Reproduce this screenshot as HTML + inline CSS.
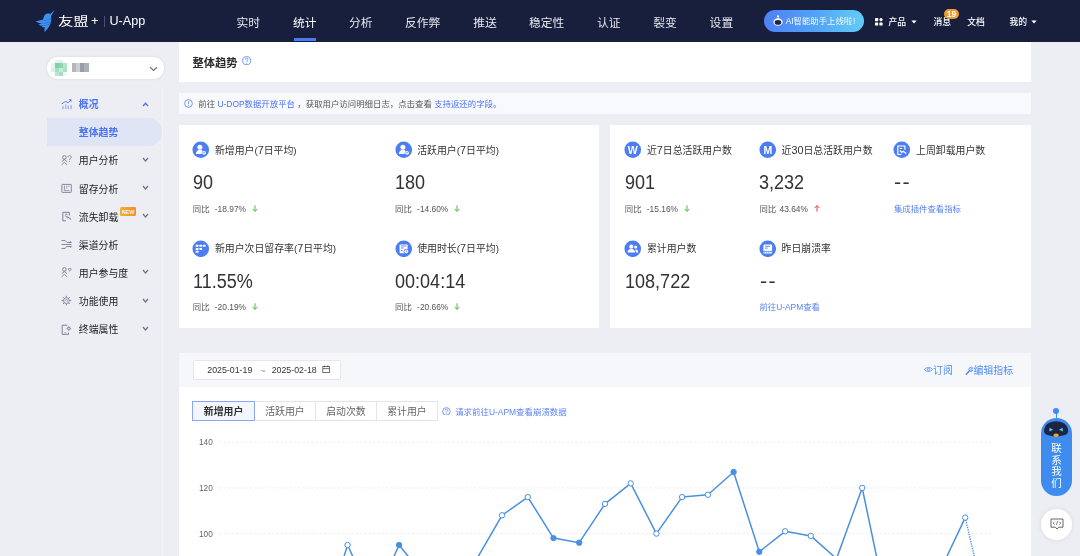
<!DOCTYPE html>
<html lang="zh-CN">
<head>
<meta charset="utf-8">
<title>友盟+ U-App 整体趋势</title>
<style>
*{box-sizing:border-box;margin:0;padding:0}
html,body{width:1080px;height:556px;overflow:hidden}
body{position:relative;background:#edeef3;font-family:"Liberation Sans","Noto Sans CJK SC",sans-serif;color:#333;font-size:10px}
.a{position:absolute;white-space:nowrap}
.hdr{left:0;top:0;width:1080px;height:42px;background:#181f3d}
.nav{top:11.3px;height:24px;line-height:24px;font-size:11.8px;color:#e4e6ee}
.nav.on{color:#fff}
.hr{top:11.8px;height:20px;line-height:20px;font-size:8.8px;color:#fff;font-weight:500}
.card{background:#fff}
.mi{left:78.8px;height:20px;line-height:20px;font-size:9.9px;color:#1c1c1c;font-weight:400}
.lbl{height:16px;line-height:16px;font-size:9.9px;color:#333}
.val{height:26px;line-height:26px;font-size:19.5px;color:#333}
.cmp{height:12px;line-height:12px;font-size:8.4px;color:#555}
.lbl b{font-weight:normal;font-size:10.8px;line-height:10px}
.lnk{color:#4a72f5}
.ic{width:16.5px;height:16.5px;border-radius:50%;background:#4a7af5}
.tab{top:401px;height:19.7px;line-height:20px;font-size:9.9px;color:#666;text-align:center;border:1px solid #e3e5ec;background:#fff}
.ax{font-size:8.25px;color:#666;height:12px;line-height:12px}
</style>
</head>
<body>
<div id="root" style="position:absolute;left:0;top:0;width:1080px;height:556px;will-change:transform;overflow:hidden">
<!-- header -->
<div class="a hdr"></div>
<svg class="a" style="left:30px;top:5px" width="32" height="32" viewBox="0 0 32 32">
  <path d="M24.6 5L20.3 9C18.500 8.100 15.800 8.500 14.600 10.200C13.800 11.400 13.600 12.800 13.200 14.400L5.400 16.400C8 17.700 10 18.300 11.800 18.300L8.500 19.700C10.400 20.700 12 20.900 13.400 20.500L11.500 21.900C12.800 22.400 13.800 22.400 14.600 22C14.300 23.800 14.300 25.300 14.700 27C17 24.800 18.800 22.400 19.900 20C21.100 17.200 21.700 14.400 21 11.200Z" fill="#3f8fee"/>
  <path d="M13.400 15.400C15.800 15.600 18.400 15 20.600 13.600M12.400 18.400C15.200 18.600 18.200 17.800 20.600 16M13.800 20.600C16 20.600 18.400 19.800 20.200 18.400" fill="none" stroke="#2b6fd0" stroke-width=".7"/>
</svg>
<div class="a" style="left:58.4px;top:11.3px;height:22px;line-height:22px;font-size:12.2px;color:#fff;font-weight:400;transform:scaleX(1.26);transform-origin:0 50%">友盟</div>
<div class="a" style="left:91px;top:10px;height:22px;line-height:22px;font-size:13px;color:#fff">+</div>
<div class="a" style="left:104px;top:16px;width:1px;height:10.5px;background:#4a5170"></div>
<div class="a" style="left:109.5px;top:10px;height:22px;line-height:22px;font-size:12.6px;color:#fff">U-App</div>

<div class="a nav" style="left:236.5px">实时</div>
<div class="a nav on" style="left:293px">统计</div>
<div class="a" style="left:293.5px;top:38.2px;width:22.5px;height:2.4px;background:#4a7af5"></div>
<div class="a nav" style="left:349px">分析</div>
<div class="a nav" style="left:405px">反作弊</div>
<div class="a nav" style="left:473.3px">推送</div>
<div class="a nav" style="left:529px">稳定性</div>
<div class="a nav" style="left:597px">认证</div>
<div class="a nav" style="left:653.3px">裂变</div>
<div class="a nav" style="left:709.6px">设置</div>

<div class="a" style="left:764.3px;top:9.7px;width:99.6px;height:22.8px;border-radius:11.25px;background:linear-gradient(90deg,#4f80f6 0%,#52a2f6 50%,#62cdf6 100%)"></div>
<svg class="a" style="left:772.5px;top:15px" width="10" height="11" viewBox="0 0 10 11">
  <circle cx="5" cy="1.3" r="1" fill="#fff"/><rect x="4.6" y="1.5" width=".8" height="2" fill="#fff"/>
  <ellipse cx="5" cy="7" rx="4.6" ry="3.8" fill="#fff"/><ellipse cx="5" cy="7.4" rx="3.3" ry="2.3" fill="#1d2544"/>
</svg>
<div class="a" style="left:785.7px;top:11.7px;height:18px;line-height:18px;font-size:8.4px;color:#f4f8ff">AI智能助手上线啦<span style="margin-left:.8px">!</span></div>

<svg class="a" style="left:875px;top:18px" width="8" height="8" viewBox="0 0 8 8"><rect x="0" y="0" width="3.2" height="3.2" rx=".6" fill="#fff"/><rect x="4.600" y=".2" width="2.800" height="2.800" rx=".5" fill="#fff" transform="rotate(45 6 1.600)"/><rect x="0" y="4.4" width="3.2" height="3.2" rx=".6" fill="#fff"/><rect x="4.4" y="4.4" width="3.2" height="3.2" rx=".6" fill="#fff"/></svg>
<div class="a hr" style="left:888.5px">产品</div>
<svg class="a" style="left:910.5px;top:20px" width="6" height="4" viewBox="0 0 6 4"><path d="M.4 .4h5.2L3 3.6z" fill="#fff"/></svg>
<div class="a hr" style="left:933.5px">消息</div>
<div class="a" style="left:943.8px;top:8.8px;width:15.2px;height:10px;border-radius:5px;background:#ee9b33;color:#fff;font-size:8.8px;letter-spacing:-.3px;line-height:10.3px;text-align:center;font-weight:bold">19</div>
<div class="a hr" style="left:967.3px">文档</div>
<div class="a hr" style="left:1009.5px">我的</div>
<svg class="a" style="left:1031px;top:20px" width="6" height="4" viewBox="0 0 6 4"><path d="M.4 .4h5.2L3 3.6z" fill="#fff"/></svg>

<!-- sidebar -->

<div class="a" style="left:46.5px;top:56.5px;width:117.5px;height:22px;border-radius:11px;background:#fff;box-shadow:0 0 3px rgba(60,70,110,.12)"></div>
<svg class="a" style="left:44px;top:52px" width="60" height="30" viewBox="44 52 60 30" shape-rendering="crispEdges"><rect x="54.9" y="60.1" width="4.1" height="3.0" fill="#e4f5ec"/><rect x="59.0" y="60.1" width="4.0" height="3.0" fill="#dff3e8"/><rect x="50.9" y="63.1" width="4.0" height="4.5" fill="#e6f6ee"/><rect x="54.9" y="63.1" width="4.1" height="4.5" fill="#7fd1a6"/><rect x="59.0" y="63.1" width="4.0" height="4.5" fill="#8ed6b0"/><rect x="63.0" y="63.1" width="4.1" height="4.5" fill="#b5e4cb"/><rect x="50.9" y="67.6" width="4.0" height="4.1" fill="#dcf2e6"/><rect x="54.9" y="67.6" width="4.1" height="4.1" fill="#a3dec0"/><rect x="59.0" y="67.6" width="4.0" height="4.1" fill="#c5ead7"/><rect x="63.0" y="67.6" width="4.1" height="4.1" fill="#ade1c6"/><rect x="54.9" y="71.7" width="4.1" height="4.2" fill="#b9e6cf"/><rect x="59.0" y="71.7" width="4.0" height="4.2" fill="#a5dfc1"/><rect x="63.0" y="71.7" width="4.1" height="4.2" fill="#f0faf5"/><rect x="71.8" y="63.1" width="4.2" height="8.6" fill="#b5b5bb"/><rect x="76.0" y="63.1" width="4.0" height="8.6" fill="#cfcfd2"/><rect x="80.0" y="63.1" width="4.1" height="8.6" fill="#9a9da6"/><rect x="84.1" y="63.1" width="4.8" height="8.6" fill="#adb0b9"/></svg>
<svg class="a" style="left:148.5px;top:65.6px" width="9" height="6" viewBox="0 0 9 6"><path d="M1.100 1.300l3.400 3.200L7.900 1.300" fill="none" stroke="#6c7185" stroke-width="1.200"/></svg>
<div class="a" style="left:162px;top:88px;width:1px;height:470px;background:#f1f2f6"></div>

<div class="a" style="left:46.5px;top:118.2px;width:115.5px;height:28px;border-radius:0 14px 14px 0;background:#dfe5f5"></div>
<div class="a mi" style="top:95.2px;color:#4a72f5;font-weight:bold">概况</div>
<div class="a mi" style="top:123.3px;color:#4a72f5;font-weight:bold">整体趋势</div>
<div class="a mi" style="top:151.4px">用户分析</div>
<div class="a mi" style="top:179.5px">留存分析</div>
<div class="a mi" style="top:207.6px">流失卸载</div>
<div class="a mi" style="top:235.7px">渠道分析</div>
<div class="a mi" style="top:263.8px">用户参与度</div>
<div class="a mi" style="top:291.9px">功能使用</div>
<div class="a mi" style="top:320.0px">终端属性</div>
<div class="a" style="left:120px;top:206.9px;width:16px;height:8.8px;border-radius:1.5px 1px 1.5px 1px;background:linear-gradient(90deg,#f1ac3b,#ee9131);color:#fff6e6;font-size:5.4px;font-weight:bold;line-height:11.2px;overflow:hidden;text-align:center">NEW</div>
<svg class="a" style="left:142px;top:101.5px" width="7" height="5" viewBox="0 0 7 5"><path d="M1 4l2.5-2.700L6 4" fill="none" stroke="#4a72f5" stroke-width="1.300"/></svg>
<svg class="a" style="left:142px;top:157.0px" width="7" height="5.500" viewBox="0 0 7 5.500"><path d="M1 1l2.500 3L6 1" fill="none" stroke="#6b7186" stroke-width="1.200"/></svg>
<svg class="a" style="left:142px;top:185.1px" width="7" height="5.500" viewBox="0 0 7 5.500"><path d="M1 1l2.500 3L6 1" fill="none" stroke="#6b7186" stroke-width="1.200"/></svg>
<svg class="a" style="left:142px;top:213.2px" width="7" height="5.500" viewBox="0 0 7 5.500"><path d="M1 1l2.500 3L6 1" fill="none" stroke="#6b7186" stroke-width="1.200"/></svg>
<svg class="a" style="left:142px;top:269.4px" width="7" height="5.500" viewBox="0 0 7 5.500"><path d="M1 1l2.500 3L6 1" fill="none" stroke="#6b7186" stroke-width="1.200"/></svg>
<svg class="a" style="left:142px;top:297.5px" width="7" height="5.500" viewBox="0 0 7 5.500"><path d="M1 1l2.500 3L6 1" fill="none" stroke="#6b7186" stroke-width="1.200"/></svg>
<svg class="a" style="left:142px;top:325.6px" width="7" height="5.500" viewBox="0 0 7 5.500"><path d="M1 1l2.500 3L6 1" fill="none" stroke="#6b7186" stroke-width="1.200"/></svg>
<svg class="a" style="left:60.5px;top:98.6px" width="11" height="11" viewBox="0 0 11 11"><path d="M2 10.200V7.200M7.200 10.200V6.600M10.100 10.200V6.200" stroke="#7d9af7" stroke-width="1" fill="none"/><path d="M4.700 10.200V5.400" stroke="#9db3f9" stroke-width="1.400" fill="none"/><path d="M.7 5L4.700 2.300L7 3.900L9.600 1.300" stroke="#4a72f5" stroke-width=".9" fill="none"/><path d="M7.600 .3H10.400V3.200z" fill="#4a72f5"/></svg>
<svg class="a" style="left:60.5px;top:154.9px" width="11" height="11" viewBox="0 0 11 11"><circle cx="3.4" cy="2.4" r="1.800" stroke="#6f778c" fill="none" stroke-width=".85"/><path d="M.7 6.700L3.400 4.500L6.100 6.700M.7 9.800L3.400 7.300L6.100 9.800" stroke="#6f778c" fill="none" stroke-width=".85"/><path d="M7 2.100c0-2 3.200-2 3.200 0c0 1.300-1.600 1.300-1.600 2.900M8.600 6.100v.9" stroke="#6f778c" fill="none" stroke-width=".85"/></svg>
<svg class="a" style="left:60.5px;top:183.0px" width="11" height="11" viewBox="0 0 11 11"><rect x=".9" y="1.400" width="9.400" height="8" rx=".5" stroke="#6f778c" fill="none" stroke-width=".85"/><path d="M3.400 2.600v5h5.200M5.800 2.600v3M8 2.600v1.400" stroke="#8a91a4" stroke-width=".9" fill="none"/></svg>
<svg class="a" style="left:60.5px;top:211.1px" width="11" height="11" viewBox="0 0 11 11"><path d="M8.300 4.600V1.300H1.800v8.500h3.300" stroke="#6f778c" fill="none" stroke-width=".9"/><path d="M4 3.200h2.600" stroke="#6f778c" fill="none" stroke-width=".8"/><path d="M4.200 4.600L6.800 7M6.600 5.600L10.200 8.600" stroke="#6f778c" fill="none" stroke-width="1"/></svg>
<svg class="a" style="left:60.5px;top:239.1px" width="11" height="11" viewBox="0 0 11 11"><path d="M.5 1.500h3.600l1.900 2h4.400M8.900 2.100l1.500 1.400M.5 5.500h9.900M.5 9.500h3.600l1.400-2h4.900M10.400 7.500L9 8.700" stroke="#6f778c" fill="none" stroke-width=".85"/></svg>
<svg class="a" style="left:60.5px;top:267.3px" width="11" height="11" viewBox="0 0 11 11"><circle cx="3.4" cy="2.4" r="1.800" stroke="#6f778c" fill="none" stroke-width=".85"/><path d="M.7 6.700L3.400 4.500L6.100 6.700M.7 9.800L3.400 7.300L6.100 9.800" stroke="#6f778c" fill="none" stroke-width=".85"/><path d="M8.700 4.100C6.400 2.400 7.500 .6 8.700 1.700C9.900 .6 11 2.400 8.700 4.100z" stroke="#6f778c" fill="none" stroke-width=".8"/></svg>
<svg class="a" style="left:60.5px;top:295.4px" width="11" height="11" viewBox="0 0 11 11"><circle cx="5.400" cy="5.600" r="2.900" stroke="#6f778c" fill="none" stroke-width=".85"/><path d="M4.600 6.200a1.100 1.100 0 1 1 1.600 .3" stroke="#6f778c" fill="none" stroke-width=".7"/><path d="M5.400 .8v1.500M5.400 8.900v1.500M.6 5.600h1.500M8.700 5.600h1.500M2 2.200l1.100 1.100M7.700 7.900l1.100 1.100M8.800 2.200L7.700 3.300M3.100 7.900L2 9" stroke="#6f778c" fill="none" stroke-width=".9"/></svg>
<svg class="a" style="left:60.5px;top:323.5px" width="11" height="11" viewBox="0 0 11 11"><path d="M6.300 1.200H1.200v9.200h6.300V8.600" stroke="#6f778c" fill="none" stroke-width=".9"/><path d="M3.400 8.600h1.800" stroke="#6f778c" fill="none" stroke-width=".7"/><circle cx="7.800" cy="4.500" r="1.300" stroke="#6f778c" fill="none" stroke-width=".8"/><path d="M7.800 2.300v.9M7.800 5.800v.9M5.600 4.500h.9M9.100 4.500h.9M6.300 3l.6.600M8.700 5.400l.6.600M9.300 3l-.6.600M6.900 5.400l-.6.600" stroke="#6f778c" fill="none" stroke-width=".7"/></svg>
<!-- main -->

<div class="a card" style="left:178.5px;top:42px;width:852.5px;height:39.5px"></div>
<div class="a" style="left:192.5px;top:52.7px;height:20px;line-height:20px;font-size:11.25px;font-weight:bold;color:#2a2a2a">整体趋势</div>
<svg class="a" style="left:242px;top:55.7px" width="9.400" height="9.400" viewBox="0 0 10 10"><circle cx="5" cy="5" r="4.3" fill="none" stroke="#5b83f5" stroke-width=".9"/><path d="M3.5 4c0-2 3-2 3 0c0 1.1-1.5 1.1-1.5 2.2M5 7.2v.9" stroke="#5b83f5" stroke-width=".9" fill="none"/></svg>

<div class="a" style="left:178.5px;top:92.7px;width:852.5px;height:21.2px;background:#f8f9fd"></div>
<svg class="a" style="left:183.8px;top:99.3px" width="9" height="9" viewBox="0 0 10 10"><circle cx="5" cy="5" r="4.3" fill="none" stroke="#5b83f5" stroke-width=".9"/><path d="M5 2.6v3.2M5 6.8v.9" stroke="#5b83f5" stroke-width=".9"/></svg>
<div class="a" style="left:198.3px;top:95.8px;height:16px;line-height:16px;font-size:8.42px;color:#555">前往 <span class="lnk">U-DOP数据开放平台</span> ，获取用户访问明细日志，点击查看 <span class="lnk">支持返还的字段。</span></div>

<div class="a card" style="left:178.5px;top:125px;width:420.5px;height:203px"></div>
<div class="a card" style="left:610.2px;top:125px;width:420.8px;height:203px"></div>
<svg class="a" style="left:192.20px;top:141.10px" width="17.5" height="17.5" viewBox="-.5 -.5 17.5 17.5"><circle cx="8.25" cy="8.25" r="8.3" fill="#4c7df3"/><circle cx="7.4" cy="5.7" r="2.5" fill="#fff"/><path d="M3.4 12.6c0-2.8 1.8-4.4 4-4.4 1.2 0 2.2.5 2.9 1.3a2.6 2.6 0 0 0-1 3.1z" fill="#fff"/><circle cx="11.6" cy="11.3" r="1.9" fill="#fff"/><path d="M10.6 11.3h2" stroke="#4a7af5" stroke-width=".8"/></svg>
<div class="a lbl" style="left:214.9px;top:142.8px">新增用户(<b>7</b>日平均)</div>
<div class="a val" style="left:192.6px;top:169.2px;transform:scaleX(0.925);transform-origin:0 0">90</div>
<div class="a cmp" style="left:192.8px;top:202.8px">同比</div>
<div class="a cmp" style="left:214.8px;top:202.8px">-18.97%</div>
<svg class="a" style="left:251.7px;top:204.7px" width="6" height="7" viewBox="0 0 6 7"><path d="M3 .300V6.300M.500 3.800L3 6.400l2.500-2.600" fill="none" stroke="#4fbe3f" stroke-width="1"/></svg>
<svg class="a" style="left:394.50px;top:141.10px" width="17.5" height="17.5" viewBox="-.5 -.5 17.5 17.5"><circle cx="8.25" cy="8.25" r="8.3" fill="#4c7df3"/><circle cx="7.4" cy="5.7" r="2.5" fill="#fff"/><path d="M3.4 12.6c0-2.8 1.8-4.4 4-4.4 1.2 0 2.2.5 2.9 1.3a2.6 2.6 0 0 0-1 3.1z" fill="#fff"/><circle cx="11.6" cy="11.3" r="1.9" fill="#fff"/><path d="M10.6 11.3h2" stroke="#4a7af5" stroke-width=".8"/></svg>
<div class="a lbl" style="left:417.2px;top:142.8px">活跃用户(<b>7</b>日平均)</div>
<div class="a val" style="left:394.9px;top:169.2px;transform:scaleX(0.925);transform-origin:0 0">180</div>
<div class="a cmp" style="left:395.1px;top:202.8px">同比</div>
<div class="a cmp" style="left:417.1px;top:202.8px">-14.60%</div>
<svg class="a" style="left:454.0px;top:204.7px" width="6" height="7" viewBox="0 0 6 7"><path d="M3 .300V6.300M.500 3.800L3 6.400l2.500-2.600" fill="none" stroke="#4fbe3f" stroke-width="1"/></svg>
<svg class="a" style="left:192.20px;top:239.60px" width="17.5" height="17.5" viewBox="-.5 -.5 17.5 17.5"><circle cx="8.25" cy="8.25" r="8.3" fill="#4c7df3"/><rect x="3.25" y="4.30" width="2.700" height="1.900" rx=".5" fill="#fff"/><rect x="6.90" y="4.30" width="2.700" height="1.900" rx=".5" fill="#fff"/><rect x="10.35" y="4.30" width="2.700" height="1.900" rx=".5" fill="#fff"/><rect x="3.25" y="7.50" width="2.700" height="1.900" rx=".5" fill="#fff"/><rect x="6.90" y="7.50" width="2.700" height="1.900" rx=".5" fill="#fff"/><rect x="3.25" y="10.35" width="2.700" height="1.900" rx=".5" fill="#fff"/></svg>
<div class="a lbl" style="left:214.9px;top:241.3px">新用户次日留存率(<b>7</b>日平均)</div>
<div class="a val" style="left:192.6px;top:267.7px;transform:scaleX(0.925);transform-origin:0 0">11.55%</div>
<div class="a cmp" style="left:192.8px;top:301.3px">同比</div>
<div class="a cmp" style="left:214.8px;top:301.3px">-20.19%</div>
<svg class="a" style="left:251.7px;top:303.2px" width="6" height="7" viewBox="0 0 6 7"><path d="M3 .300V6.300M.500 3.800L3 6.400l2.500-2.600" fill="none" stroke="#4fbe3f" stroke-width="1"/></svg>
<svg class="a" style="left:394.50px;top:239.60px" width="17.5" height="17.5" viewBox="-.5 -.5 17.5 17.5"><circle cx="8.25" cy="8.25" r="8.3" fill="#4c7df3"/><rect x="4.1" y="4.05" width="8" height="8.8" rx=".8" fill="#fff"/><path d="M5.400 5.500h5.400M5.400 7.500h2.800M5.400 10h1.600" stroke="#4c7df3" stroke-width=".9"/><circle cx="10.800" cy="10.900" r="2.600" fill="#4c7df3"/><circle cx="10.800" cy="10.900" r="1.900" fill="#fff"/><path d="M10.700 9.800v1.200l1 .7" stroke="#4c7df3" stroke-width=".7" fill="none"/></svg>
<div class="a lbl" style="left:417.2px;top:241.3px">使用时长(<b>7</b>日平均)</div>
<div class="a val" style="left:394.9px;top:267.7px;transform:scaleX(0.925);transform-origin:0 0">00:04:14</div>
<div class="a cmp" style="left:395.1px;top:301.3px">同比</div>
<div class="a cmp" style="left:417.1px;top:301.3px">-20.66%</div>
<svg class="a" style="left:454.0px;top:303.2px" width="6" height="7" viewBox="0 0 6 7"><path d="M3 .300V6.300M.500 3.800L3 6.400l2.500-2.600" fill="none" stroke="#4fbe3f" stroke-width="1"/></svg>
<svg class="a" style="left:624.20px;top:141.10px" width="17.5" height="17.5" viewBox="-.5 -.5 17.5 17.5"><circle cx="8.25" cy="8.25" r="8.3" fill="#4c7df3"/><text x="8.25" y="12" text-anchor="middle" font-family="Liberation Sans, sans-serif" font-weight="bold" font-size="10.5" fill="#fff">W</text></svg>
<div class="a lbl" style="left:646.9px;top:142.8px">近<b>7</b>日总活跃用户数</div>
<div class="a val" style="left:624.6px;top:169.2px;transform:scaleX(0.925);transform-origin:0 0">901</div>
<div class="a cmp" style="left:624.8px;top:202.8px">同比</div>
<div class="a cmp" style="left:646.8px;top:202.8px">-15.16%</div>
<svg class="a" style="left:683.5px;top:204.7px" width="6" height="7" viewBox="0 0 6 7"><path d="M3 .300V6.300M.500 3.800L3 6.400l2.500-2.600" fill="none" stroke="#4fbe3f" stroke-width="1"/></svg>
<svg class="a" style="left:758.80px;top:141.10px" width="17.5" height="17.5" viewBox="-.5 -.5 17.5 17.5"><circle cx="8.25" cy="8.25" r="8.3" fill="#4c7df3"/><text x="8.25" y="12" text-anchor="middle" font-family="Liberation Sans, sans-serif" font-weight="bold" font-size="10.5" fill="#fff">M</text></svg>
<div class="a lbl" style="left:781.5px;top:142.8px">近<b>30</b>日总活跃用户数</div>
<div class="a val" style="left:759.2px;top:169.2px;transform:scaleX(0.925);transform-origin:0 0">3,232</div>
<div class="a cmp" style="left:759.4px;top:202.8px">同比</div>
<div class="a cmp" style="left:779.5px;top:202.8px">43.64%</div>
<svg class="a" style="left:813.8px;top:204.7px" width="6" height="7" viewBox="0 0 6 7"><path d="M3 6.700V.700M.500 3.200L3 .600l2.500 2.600" fill="none" stroke="#e8413a" stroke-width="1"/></svg>
<svg class="a" style="left:893.30px;top:141.10px" width="17.5" height="17.5" viewBox="-.5 -.5 17.5 17.5"><circle cx="8.25" cy="8.25" r="8.3" fill="#4c7df3"/><path d="M11.400 8.200V4.500H4.300v8.500h3.600" fill="none" stroke="#fff" stroke-width="1.200"/><path d="M6.300 6.900h2.400" stroke="#fff" stroke-width="1"/><path d="M6.300 9l2 2 1.500-1.300 3 2.200" fill="none" stroke="#fff" stroke-width="1.200"/></svg>
<div class="a lbl" style="left:916.0px;top:142.8px">上周卸载用户数</div>
<div class="a val" style="left:894.2px;top:169.0px;letter-spacing:1.3px;transform:scaleX(1.1);transform-origin:0 0">--</div>
<div class="a cmp" style="left:893.9px;top:202.8px;color:#5b83f5">集成插件查看指标</div>
<svg class="a" style="left:624.20px;top:239.60px" width="17.5" height="17.5" viewBox="-.5 -.5 17.5 17.5"><circle cx="8.25" cy="8.25" r="8.3" fill="#4c7df3"/><circle cx="6.8" cy="6.2" r="2.1" fill="#fff"/><path d="M3 12c0-2.4 1.6-3.6 3.8-3.6s3.8 1.2 3.8 3.6z" fill="#fff"/><circle cx="11.2" cy="6.6" r="1.5" fill="#fff"/><path d="M11.4 12c0-1.2-.3-2.2-.9-3 .2-.1.5-.1.8-.1 1.500 0 2.400 1 2.400 3.100z" fill="#fff"/></svg>
<div class="a lbl" style="left:646.9px;top:241.3px">累计用户数</div>
<div class="a val" style="left:624.6px;top:267.7px;transform:scaleX(0.925);transform-origin:0 0">108,722</div>
<svg class="a" style="left:758.80px;top:239.60px" width="17.5" height="17.5" viewBox="-.5 -.5 17.5 17.5"><circle cx="8.25" cy="8.25" r="8.3" fill="#4c7df3"/><path d="M3.900 11V5a.9 .9 0 0 1 .9-.9h6.900a.9 .9 0 0 1 .9 .9V11z" fill="#fff"/><path d="M5.500 5.700h5.200M5.500 7.600h2.800" stroke="#4c7df3" stroke-width=".9"/><path d="M3.900 11.300l1.100 .9 1.100-.9 1.100 .9 1.100-.9 1.100 .9 1.100-.9 1.100 .9 1.050-.9v1.600H3.900z" fill="#fff"/><path d="M3.900 11l1.100-.9 1.100 .9 1.100-.9 1.100 .9 1.100-.9 1.100 .9 1.100-.9 1.050 .9z" fill="#4c7df3"/></svg>
<div class="a lbl" style="left:781.5px;top:241.3px">昨日崩溃率</div>
<div class="a val" style="left:759.7px;top:267.5px;letter-spacing:1.3px;transform:scaleX(1.1);transform-origin:0 0">--</div>
<div class="a cmp" style="left:759.4px;top:301.3px;color:#5b83f5">前往U-APM查看</div>

<div class="a" style="left:178.5px;top:353px;width:852.5px;height:34px;background:#f6f7fa"></div>
<div class="a card" style="left:178.5px;top:387px;width:852.5px;height:169px"></div>
<div class="a" style="left:193px;top:360.4px;width:147.5px;height:19.2px;background:#fff;border:1px solid #e4e6eb;border-radius:1.5px"></div>
<div class="a" style="left:207.3px;top:364px;height:12px;line-height:12px;font-size:8.8px;color:#333">2025-01-19</div>
<div class="a" style="left:260px;top:365.2px;height:12px;line-height:12px;font-size:9.5px;color:#999">~</div>
<div class="a" style="left:271.7px;top:364px;height:12px;line-height:12px;font-size:8.8px;color:#333">2025-02-18</div>
<svg class="a" style="left:321.7px;top:365.3px" width="8.4" height="8.4" viewBox="0 0 9 9"><rect x=".9" y="1.600" width="7.200" height="6.600" fill="none" stroke="#444" stroke-width=".8"/><path d="M.9 3.900h7.200M2.800 .500v1.800M6.200 .500v1.800" stroke="#444" stroke-width=".8"/></svg>

<svg class="a" style="left:924px;top:366.300px" width="9" height="7" viewBox="0 0 9 7"><path d="M.500 3.500C2 .800 7 .800 8.500 3.500C7 6.200 2 6.200 .500 3.500z" fill="none" stroke="#4c8bf5" stroke-width=".8"/><circle cx="4.500" cy="3.500" r="1.200" fill="none" stroke="#4c8bf5" stroke-width=".8"/></svg>
<div class="a" style="left:933px;top:362.9px;height:16px;line-height:16px;font-size:9.9px;color:#4c8bf5">订阅</div>
<svg class="a" style="left:964.500px;top:365.500px" width="9" height="9" viewBox="0 0 9 9"><path d="M1.200 8.200L4.600 4.800" stroke="#4c8bf5" stroke-width="1.500" stroke-linecap="round" fill="none"/><path d="M7.700 2.100A2.100 2.100 0 1 0 7.900 4.200L6.400 4.300L5.700 3.200Z" fill="none" stroke="#4c8bf5" stroke-width=".9"/></svg>
<div class="a" style="left:973.5px;top:362.9px;height:16px;line-height:16px;font-size:9.9px;color:#4c8bf5">编辑指标</div>

<div class="a tab" style="left:254px;width:61.800px">活跃用户</div>
<div class="a tab" style="left:315px;width:61.800px">启动次数</div>
<div class="a tab" style="left:376px;width:61.800px">累计用户</div>
<div class="a tab" style="left:192.400px;width:62.400px;border-color:#8aa6f7;background:#f4f6fe;color:#2f2f2f;font-weight:bold">新增用户</div>
<svg class="a" style="left:442.300px;top:406.500px" width="8.800" height="8.800" viewBox="0 0 10 10"><circle cx="5" cy="5" r="4.300" fill="none" stroke="#5b83f5" stroke-width=".9"/><path d="M3.500 4c0-2 3-2 3 0c0 1.100-1.500 1.100-1.500 2.200M5 7.200v.9" stroke="#5b83f5" stroke-width=".9" fill="none"/></svg>
<div class="a" style="left:455.2px;top:406.4px;height:12px;line-height:12px;font-size:8.45px;color:#5b83f5">请求前往U-APM查看崩溃数据</div>
<svg class="a" style="left:0;top:387px" width="1080" height="169" viewBox="0 387 1080 169">
<path d="M219 442.3H991" stroke="#e6e8ee" stroke-width=".8" stroke-dasharray="2.2 2.2"/>
<path d="M219 487.9H991" stroke="#e6e8ee" stroke-width=".8" stroke-dasharray="2.2 2.2"/>
<path d="M219 533.6H991" stroke="#e6e8ee" stroke-width=".8" stroke-dasharray="2.2 2.2"/>
<polyline fill="none" stroke="#4a90e2" stroke-width="1.500" stroke-linejoin="round" points="219.0,624.9 244.7,620.3 270.5,629.4 296.2,636.3 321.9,627.1 347.6,545.0 373.4,602.0 399.1,545.0 424.8,576.9 450.6,590.6 476.3,559.8 502.0,515.3 527.8,497.1 553.5,538.1 579.2,542.7 605.0,503.9 630.7,483.4 656.4,533.6 682.1,497.1 707.9,494.8 733.6,472.0 759.3,551.8 785.1,531.3 810.8,535.9 836.5,558.7 862.2,487.9 888.0,611.2 913.7,624.9 939.4,572.4 965.2,517.6"/>
<path d="M965.2 517.6L990.9 627.1" stroke="#4a90e2" stroke-width="1.500" stroke-dasharray="1.200 1.200" fill="none"/>
<circle cx="347.6" cy="545.0" r="2.700" fill="#fff" stroke="#4a90e2" stroke-width="1"/>
<circle cx="399.1" cy="545.0" r="2.700" fill="#4a90e2" stroke="#4a90e2" stroke-width="1"/>
<circle cx="502.0" cy="515.3" r="2.700" fill="#fff" stroke="#4a90e2" stroke-width="1"/>
<circle cx="527.8" cy="497.1" r="2.700" fill="#fff" stroke="#4a90e2" stroke-width="1"/>
<circle cx="553.5" cy="538.1" r="2.700" fill="#4a90e2" stroke="#4a90e2" stroke-width="1"/>
<circle cx="579.2" cy="542.7" r="2.700" fill="#4a90e2" stroke="#4a90e2" stroke-width="1"/>
<circle cx="605.0" cy="503.9" r="2.700" fill="#fff" stroke="#4a90e2" stroke-width="1"/>
<circle cx="630.7" cy="483.4" r="2.700" fill="#fff" stroke="#4a90e2" stroke-width="1"/>
<circle cx="656.4" cy="533.6" r="2.700" fill="#fff" stroke="#4a90e2" stroke-width="1"/>
<circle cx="682.1" cy="497.1" r="2.700" fill="#fff" stroke="#4a90e2" stroke-width="1"/>
<circle cx="707.9" cy="494.8" r="2.700" fill="#fff" stroke="#4a90e2" stroke-width="1"/>
<circle cx="733.6" cy="472.0" r="2.700" fill="#4a90e2" stroke="#4a90e2" stroke-width="1"/>
<circle cx="759.3" cy="551.8" r="2.700" fill="#4a90e2" stroke="#4a90e2" stroke-width="1"/>
<circle cx="785.1" cy="531.3" r="2.700" fill="#fff" stroke="#4a90e2" stroke-width="1"/>
<circle cx="810.8" cy="535.9" r="2.700" fill="#fff" stroke="#4a90e2" stroke-width="1"/>
<circle cx="862.2" cy="487.9" r="2.700" fill="#fff" stroke="#4a90e2" stroke-width="1"/>
<circle cx="965.2" cy="517.6" r="2.700" fill="#fff" stroke="#4a90e2" stroke-width="1"/>
</svg>
<div class="a ax" style="left:199px;top:437.4px">140</div>
<div class="a ax" style="left:199px;top:483.0px">120</div>
<div class="a ax" style="left:199px;top:528.7px">100</div>

<div class="a" style="left:1055.600px;top:412px;width:1.600px;height:8px;background:#3f8cf0"></div>
<div class="a" style="left:1053.4px;top:408.3px;width:6px;height:6px;border-radius:50%;background:#3f8cf0"></div>
<div class="a" style="left:1041px;top:417.500px;width:31px;height:78px;border-radius:15.500px;background:#3f8cf0"></div>
<svg class="a" style="left:1043.4px;top:419.8px" width="26.2" height="18.9" viewBox="0 0 25 18"><path d="M1 11C1 4.500 6 1.200 12.500 1.200S24 4.500 24 11c0 3-5 4.600-11.500 4.600S1 14 1 11z" fill="#1d2544"/><path d="M6.200 7.400l3.400 1.800-3.400 1.800z" fill="#5ad2f5"/><path d="M18.800 7.400l-3.400 1.800 3.400 1.800z" fill="#5ad2f5"/><ellipse cx="12.500" cy="14.600" rx="2.600" ry="1.700" fill="#f5a623"/></svg>
<div class="a" style="left:1041px;top:443.2px;width:31px;font-size:10.5px;line-height:11.5px;color:#fff;text-align:center;white-space:normal">联<br>系<br>我<br>们</div>
<div class="a" style="left:1041px;top:508.500px;width:31px;height:31px;border-radius:50%;background:#fff;box-shadow:0 0 4px rgba(60,70,110,.12)"></div>
<svg class="a" style="left:1049.500px;top:517.500px" width="14" height="13" viewBox="0 0 14 13"><path d="M1 1h12v8.200H8.600L7 11 5.400 9.200H1z" fill="none" stroke="#555" stroke-width=".9" stroke-linejoin="round"/><path d="M4.600 3.600L3.200 5.100l1.400 1.500M9.400 3.600l1.400 1.500-1.400 1.500M7.700 3.200L6.300 7" stroke="#555" stroke-width=".7" fill="none"/></svg>
</div>
</body>
</html>
